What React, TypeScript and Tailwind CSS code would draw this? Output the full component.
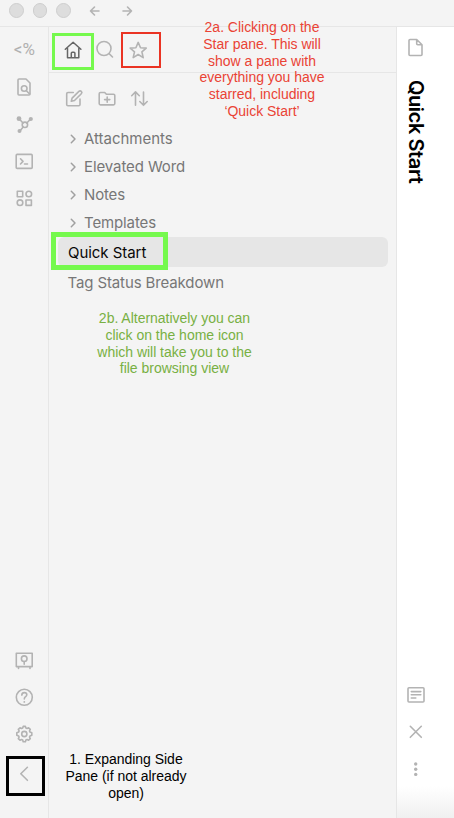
import type { ReactNode } from "react";

function Icon({ children, className = "", stroke = 1.6 }: { children: ReactNode; className?: string; stroke?: number }) {
  return (
    <svg viewBox="0 0 20 20" fill="none" stroke="currentColor" strokeWidth={stroke} strokeLinecap="round" strokeLinejoin="round" className={`h-5 w-5 shrink-0 ${className}`}>
      {children}
    </svg>
  );
}

function RailItem({ children }: { children: ReactNode }) {
  return <div className="flex h-[37px] w-12 items-center justify-center">{children}</div>;
}

function Folder({ name, tracking }: { name: string; tracking: string }) {
  return (
    <div className="flex h-7 items-center pl-[19px]">
      <Icon className="-ml-[5px] text-[#a0a0a0]" stroke={1.5}><path d="M8.3 6.3 12 10l-3.7 3.7" /></Icon>
      <span className={`ml-px whitespace-nowrap ${tracking}`}>{name}</span>
    </div>
  );
}

function Note({ lines, className }: { lines: string[]; className: string }) {
  return (
    <div className={`absolute flex flex-col items-center whitespace-nowrap font-['Liberation_Sans',Arial,sans-serif] text-[14px] leading-[16.8px] tracking-[-0.02px] ${className}`}>
      {lines.map((line) => <span key={line}>{line}</span>)}
    </div>
  );
}

export default function App() {
  return (
    <div className="relative flex h-[818px] w-[454px] flex-col overflow-hidden bg-[#f4f4f4] font-['Inter',sans-serif] text-[#b3b3b3]">
      <header className="flex h-[27px] shrink-0 items-start border-b border-[#e6e6e6] pl-[9px] pt-[3px]">
        <div className="flex gap-[9px]">
          <i className="h-[14.5px] w-[14.5px] rounded-full border border-[#cecece] bg-[#dddddd]" />
          <i className="h-[14.5px] w-[14.5px] rounded-full border border-[#cecece] bg-[#dddddd]" />
          <i className="h-[14.5px] w-[14.5px] rounded-full border border-[#cecece] bg-[#dddddd]" />
        </div>
        <Icon className="-mt-[2px] ml-[14px]"><path d="M14 10H5.5m4-4-4 4 4 4" /></Icon>
        <Icon className="-mt-[2px] ml-[12px]"><path d="M6 10h8.5m-4-4 4 4-4 4" /></Icon>
      </header>
      <div className="flex min-h-0 flex-1">
        <nav className="flex w-[49px] shrink-0 flex-col border-r border-[#e6e6e6] pt-1">
          <RailItem><span className="pl-px pt-px font-['Roboto',sans-serif] text-[17px] tracking-[0.2px] text-[#b0b0b0]">&lt;%</span></RailItem>
          <RailItem>
            <Icon><path d="M5 2h7l4 4v11a1 1 0 0 1-1 1H5a1 1 0 0 1-1-1V3a1 1 0 0 1 1-1Z" /><circle cx="10.2" cy="11.5" r="2.8" /><path d="m12.4 13.7 3.2 3.3" /></Icon>
          </RailItem>
          <RailItem>
            <Icon><circle cx="10.9" cy="10.8" r="2.7" /><path d="m9 9-3.7-4M12.8 9l3.6-3.7M9.2 13l-3.3 4" /><g fill="currentColor" stroke="none"><circle cx="5" cy="4.7" r="2.4" /><circle cx="16.8" cy="5" r="2.1" /><circle cx="5.5" cy="17" r="2" /></g></Icon>
          </RailItem>
          <RailItem>
            <Icon><rect x="2.2" y="3.4" width="16" height="14" rx="1" /><path d="m6.5 7.8 2.5 2.6L6.5 13M10.5 13h3" /></Icon>
          </RailItem>
          <RailItem>
            <Icon><path d="M3.3 3.3h5.4v5.4H3.3zM12 12h5.4v5.4H12z" /><circle cx="14.8" cy="6" r="2.8" /><circle cx="6" cy="14.7" r="2.8" /></Icon>
          </RailItem>
          <div className="mt-auto">
            <RailItem>
              <Icon><path d="M2.3 3.3h15.9v13.3H2.3zM4.5 16.8v1.7M16 16.8v1.7M10.2 11.6v2.7" /><circle cx="10.2" cy="8.7" r="2.8" /></Icon>
            </RailItem>
            <RailItem>
              <Icon><circle cx="10.3" cy="10.3" r="8" /><path d="M7.8 8.1c.1-1.7 1.1-2.5 2.5-2.5 1.5 0 2.5.8 2.5 2.2 0 2-2.5 1.9-2.5 4.1" /><path d="M10.3 14.8v.1" strokeWidth="1.8" /></Icon>
            </RailItem>
            <RailItem>
              <Icon><path d="m8.7 4 .5-1.6h2.2l.5 1.6 1.2.5 1.5-.7 1.7 1.6-.8 1.5.5 1.2 1.8.7v2.4l-1.8.7-.5 1.2.8 1.5-1.7 1.6-1.5-.7-1.2.5-.5 1.8H9.2L8.7 16l-1.2-.5-1.5.7-1.7-1.6.8-1.5-.5-1.2-1.8-.7V8.8l1.8-.7.5-1.2-.8-1.5L6 3.8l1.5.7Z" /><circle cx="10.3" cy="10" r="2.6" /></Icon>
            </RailItem>
            <div className="flex h-[66px] items-start justify-center pt-[12px]">
              <Icon><path d="m13.4 3.3-6.6 6.5 6.6 6.5" /></Icon>
            </div>
          </div>
        </nav>
        <main className="flex min-w-0 flex-1 flex-col">
          <div className="flex h-[46px] items-center border-b border-[#e6e6e6] pl-[14px]">
            <Icon className="text-[#666]" stroke={1.5}><path d="m2.3 9.3 7.8-7.1 7.8 7.1M4.5 8.5v9.3h11.3V8.5M8.3 17.5v-4.3q0-1 1-1h1.6q1 0 1 1v4.3" /></Icon>
            <Icon className="ml-3"><circle cx="9" cy="8.5" r="7" /><path d="m14.1 13.6 3.4 3.4" /></Icon>
            <Icon className="ml-[13px]"><path d="m10.2 2.4 2.3 5.3 5.7.4-4.3 3.8 1.3 5.7-5-3.1-5 3.1 1.3-5.7-4.3-3.8 5.7-.4Z" /></Icon>
          </div>
          <div className="flex h-[52px] items-center pl-[15px]">
            <Icon><path d="M9.3 3.5H4a1.3 1.3 0 0 0-1.3 1.3v10.7A1.3 1.3 0 0 0 4 16.8h10.7a1.3 1.3 0 0 0 1.3-1.3V10M7.3 12.3l.8-3.2 6.8-6.7a1.6 1.6 0 0 1 2.4 2.4l-6.8 6.7Z" /></Icon>
            <Icon className="ml-[13px]"><path d="M3.5 3.5h4.2l1.7 1.8h7.1q1.3 0 1.3 1.3v8q0 1.3-1.3 1.3h-13q-1.3 0-1.3-1.3V4.8q0-1.3 1.3-1.3ZM10.2 8v5.2M7.6 10.6h5.2" /></Icon>
            <Icon className="ml-3"><path d="M6.5 16.3V3M2.7 6.7l3.8-3.8 3.8 3.8M14.5 3v13.3m-3.7-3.8 3.7 3.8 3.7-3.8" /></Icon>
          </div>
          <div className="flex flex-col text-[15px] leading-5 text-[#777]">
            <Folder name="Attachments" tracking="tracking-[-0.02px]" />
            <Folder name="Elevated Word" tracking="tracking-[-0.1px]" />
            <Folder name="Notes" tracking="tracking-[-0.15px]" />
            <Folder name="Templates" tracking="tracking-[-0.12px]" />
            <div className="mr-2 ml-[9px] flex h-[30px] items-center rounded-md bg-[#e6e6e6] pl-[10px] pt-px tracking-[-0.05px] text-[#080808]">Quick Start</div>
            <div className="flex h-[31px] items-center pl-[18.5px] tracking-[-0.12px]">Tag Status Breakdown</div>
          </div>
        </main>
        <aside className="flex w-[58px] shrink-0 flex-col border-l border-[#e6e6e6] bg-linear-to-b from-white from-96% to-[#f0f0f0] pl-[9px] pt-[11px]">
          <Icon><path d="M4 1.5h6.7L16 6.8v9.7q0 1-1 1H4q-1 0-1-1v-14q0-1 1-1Zm6.7 0v4.3q0 1 1 1H16" /></Icon>
          <h1 className="mt-[22px] w-5 whitespace-nowrap text-[20px] font-semibold leading-5 tracking-[-0.42px] text-black [writing-mode:vertical-rl]">Quick Start</h1>
          <div className="mt-auto flex flex-col gap-[17px] pb-[39px]">
            <Icon><rect x="2" y="2.7" width="16" height="14.3" rx="1" /><path d="M5.3 6.6h9.5M5.3 9.8h9.5M5.3 13h4.5" /></Icon>
            <Icon><path d="m4.3 4.3 11 11m0-11-11 11" /></Icon>
            <Icon><g fill="currentColor" stroke="none"><circle cx="9.7" cy="5" r="1.7" /><circle cx="9.7" cy="10.2" r="1.7" /><circle cx="9.7" cy="15.4" r="1.7" /></g></Icon>
          </div>
        </aside>
      </div>

      <div className="absolute left-[52px] top-[33px] h-[37px] w-[42px] border-3 border-[#75f94d]" />
      <div className="absolute left-[121px] top-[32px] h-[36px] w-[40px] border-2 border-[#ea3323] outline-[0.5px] -outline-offset-2 outline-[#ea3323]" />
      <div className="absolute left-[51px] top-[232px] h-[38px] w-[117px] border-[5px] border-[#75f94d]" />
      <div className="absolute left-[6px] top-[756px] h-[40px] w-[39px] border-[3px] border-black" />
      <Note className="left-[172px] top-[19px] w-[180px] text-[#ea4335]" lines={["2a. Clicking on the", "Star pane. This will", "show a pane with", "everything you have", "starred, including", "‘Quick Start’"]} />
      <Note className="left-[84.5px] top-[310px] w-[180px] text-[#78b043]" lines={["2b. Alternatively you can", "click on the home icon", "which will take you to the", "file browsing view"]} />
      <Note className="left-[36px] top-[751px] w-[180px] text-black" lines={["1. Expanding Side", "Pane (if not already", "open)"]} />
    </div>
  );
}
